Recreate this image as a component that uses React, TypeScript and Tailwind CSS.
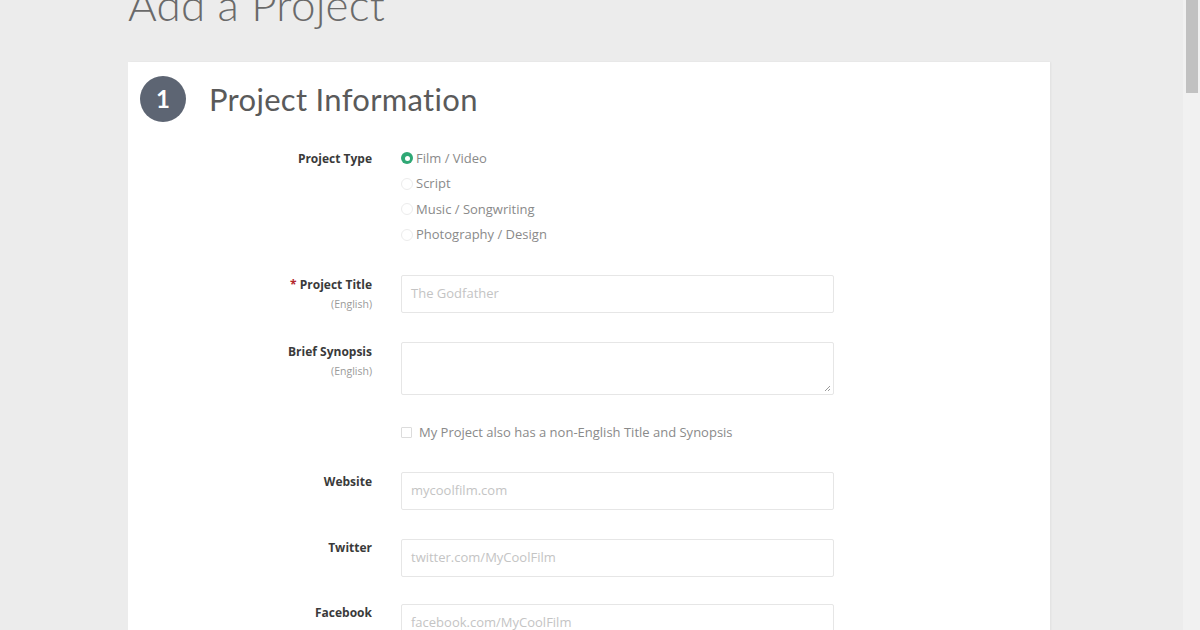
import React from "react";

const sans = { fontFamily: '"Open Sans", "Liberation Sans", sans-serif' };

function Label({ main, sub, req }: { main: string; sub?: string; req?: boolean }) {
  return (
    <div className="w-[244px] shrink-0 text-right flex flex-col items-end">
      <div className="text-[12px] leading-[14px] font-bold text-[#3a3a3a]">
        {req && <span className="text-[#b3262b]">* </span>}
        {main}
      </div>
      {sub && <div className="text-[10.5px] leading-[14px] text-[#9a9a9a] mt-[5px]">{sub}</div>}
    </div>
  );
}

function Input({ ph }: { ph: string }) {
  return (
    <div className="w-[433px] h-[38px] border border-[#e6e6e6] rounded-[2px] bg-white flex items-center pl-[9px] text-[13px] text-[#c4c4c4]">
      {ph}
    </div>
  );
}

export default function App() {
  const radios = ["Film / Video", "Script", "Music / Songwriting", "Photography / Design"];
  return (
    <div className="w-[1200px] h-[630px] overflow-hidden bg-[#ececec] flex" style={sans}>
      <div className="flex-1 flex flex-col pl-[128px]">
        <h1
          className="shrink-0 mt-[-27px] h-[89px] text-[44px] leading-[62px] font-light text-[#6a6a6a] tracking-[0.2px]"
          style={{ fontFamily: 'Lato, "Open Sans", sans-serif', fontWeight: 300 }}
        >
          Add a Project
        </h1>
        <div className="w-[922px] flex-1 shrink-0 bg-white shadow-[1px_0_2px_rgba(0,0,0,0.05)] flex flex-col">
          <div className="flex items-center pt-[14px] pl-[12px]">
            <div className="w-[46px] h-[46px] rounded-full bg-[#5d6573] text-white flex items-center justify-center text-[24px] font-bold"
              style={{ fontFamily: 'Lato, sans-serif' }}>
              1
            </div>
            <div className="ml-[23px] text-[31px] text-[#5a5a5a] font-normal tracking-[0.3px]" style={{ fontFamily: 'Lato, "Open Sans", sans-serif' }}>
              Project Information
            </div>
          </div>

          <div className="flex mt-[23px]">
            <div className="w-[244px] shrink-0 text-right text-[12px] font-bold text-[#3a3a3a] leading-[25.5px]">Project Type</div>
            <div className="ml-[29px] flex flex-col">
              {radios.map((r, i) => (
                <div key={r} className="flex items-center h-[25.5px] text-[13px] text-[#8a8a8a]">
                  {i === 0 ? (
                    <span className="w-[12px] h-[12px] rounded-full bg-[#2fa875] flex items-center justify-center">
                      <span className="w-[5px] h-[5px] rounded-full bg-white" />
                    </span>
                  ) : (
                    <span className="w-[12px] h-[12px] rounded-full border border-[#ececec] bg-white" />
                  )}
                  <span className="ml-[3px]">{r}</span>
                </div>
              ))}
            </div>
          </div>

          <div className="flex mt-[27px]">
            <div className="pt-[3px]"><Label main="Project Title" sub="(English)" req /></div>
            <div className="ml-[29px]"><Input ph="The Godfather" /></div>
          </div>

          <div className="flex mt-[29px]">
            <div className="pt-[3px]"><Label main="Brief Synopsis" sub="(English)" /></div>
            <div className="ml-[29px] relative w-[433px] h-[53px] border border-[#e6e6e6] rounded-[2px] bg-white">
              <svg className="absolute right-[2px] bottom-[2px]" width="7" height="7" viewBox="0 0 7 7">
                <path d="M6 1 L1 6 M6 4 L4 6" stroke="#9a9a9a" strokeWidth="1" />
              </svg>
            </div>
          </div>

          <div className="flex mt-[28px] h-[20px] items-center">
            <div className="w-[244px] shrink-0" />
            <div className="ml-[29px] flex items-center text-[13px] text-[#8a8a8a]">
              <span className="w-[11px] h-[11px] border border-[#dcdcdc] rounded-[1px] bg-white" />
              <span className="ml-[7px]">My Project also has a non-English Title and Synopsis</span>
            </div>
          </div>

          <div className="flex mt-[29px]">
            <div className="pt-[3px]"><Label main="Website" /></div>
            <div className="ml-[29px]"><Input ph="mycoolfilm.com" /></div>
          </div>

          <div className="flex mt-[29px]">
            <div className="pt-[2px]"><Label main="Twitter" /></div>
            <div className="ml-[29px]"><Input ph="twitter.com/MyCoolFilm" /></div>
          </div>

          <div className="flex mt-[27px]">
            <div className="pt-[2px]"><Label main="Facebook" /></div>
            <div className="ml-[29px]"><Input ph="facebook.com/MyCoolFilm" /></div>
          </div>
        </div>
      </div>
      <div className="w-[17px] h-full bg-[#f1f1f1] flex justify-center">
        <div className="w-[12px] h-[93px] bg-[#c1c1c1]" />
      </div>
    </div>
  );
}
